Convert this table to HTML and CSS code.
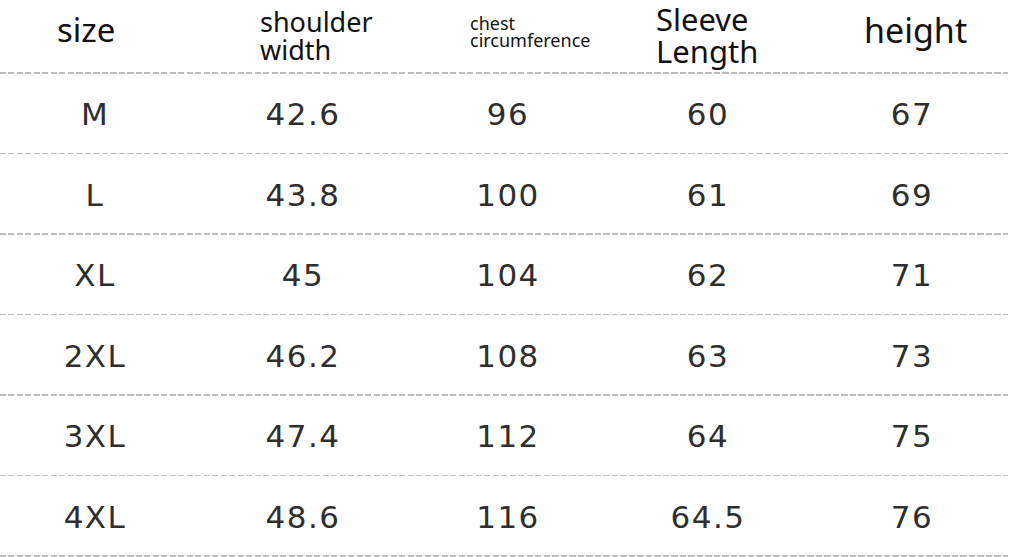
FILE: index.html
```html
<!DOCTYPE html>
<html>
<head>
<meta charset="utf-8">
<link rel="stylesheet" href="styles.css">
</head>
<body>
<div class="chart">
  <div class="row head">
    <div class="cell h-size">size</div>
    <div class="cell h-shoulder">shoulder<br>width</div>
    <div class="cell h-chest">chest<br>circumference</div>
    <div class="cell h-sleeve">Sleeve<br>Length</div>
    <div class="cell h-height">height</div>
  </div>
  <div class="rule"></div>
  <div class="row data"><div class="cell">M</div><div class="cell">42.6</div><div class="cell">96</div><div class="cell">60</div><div class="cell">67</div></div>
  <div class="rule"></div>
  <div class="row data"><div class="cell">L</div><div class="cell">43.8</div><div class="cell">100</div><div class="cell">61</div><div class="cell">69</div></div>
  <div class="rule"></div>
  <div class="row data"><div class="cell">XL</div><div class="cell">45</div><div class="cell">104</div><div class="cell">62</div><div class="cell">71</div></div>
  <div class="rule"></div>
  <div class="row data"><div class="cell">2XL</div><div class="cell">46.2</div><div class="cell">108</div><div class="cell">63</div><div class="cell">73</div></div>
  <div class="rule"></div>
  <div class="row data"><div class="cell">3XL</div><div class="cell">47.4</div><div class="cell">112</div><div class="cell">64</div><div class="cell">75</div></div>
  <div class="rule"></div>
  <div class="row data"><div class="cell">4XL</div><div class="cell">48.6</div><div class="cell">116</div><div class="cell">64.5</div><div class="cell">76</div></div>
  <div class="rule"></div>
</div>
</body>
</html>
```
FILE: styles.css
```css
html, body {
  margin: 0;
  padding: 0;
  background: #ffffff;
}
.chart {
  width: 1008px;
  display: flex;
  flex-direction: column;
}
.row {
  display: grid;
  grid-template-columns: 190px 226px 184px 216px 192px;
}
.head {
  height: 72px;
  font-family: "Noto Sans", sans-serif;
  color: #111;
}
.head .cell {
  white-space: nowrap;
}
.h-size {
  font-size: 33px;
  line-height: 40px;
  padding: 10px 0 0 57px;
}
.h-shoulder {
  font-size: 27px;
  line-height: 28px;
  padding: 8px 0 0 70px;
}
.h-chest {
  font-size: 18px;
  line-height: 17px;
  padding: 15px 0 0 54px;
}
.h-sleeve {
  font-size: 31px;
  line-height: 32px;
  padding: 3px 0 0 56px;
}
.h-height {
  font-size: 34px;
  line-height: 40px;
  padding: 10px 0 0 48px;
}
.rule {
  height: 1.5px;
  background: repeating-linear-gradient(to right, #bdbdbd 0 6px, transparent 6px 8.5px);
}
.data {
  height: 79px;
  font-family: "DejaVu Sans", sans-serif;
  font-size: 31px;
  color: #2e2e2e;
  letter-spacing: 1.5px;
}
.data .cell {
  display: flex;
  align-items: center;
  justify-content: center;
  padding-top: 2px;
}
```
